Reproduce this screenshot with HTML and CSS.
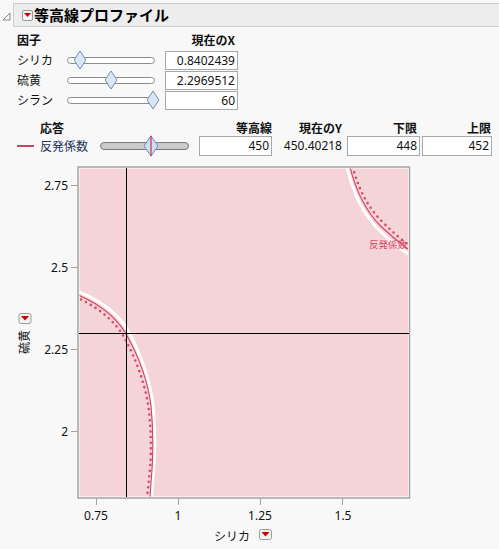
FILE: index.html
```html
<!DOCTYPE html>
<html lang="ja">
<head>
<meta charset="utf-8">
<title>等高線プロファイル</title>
<link rel="stylesheet" href="styles.css">
</head>
<body>
<div class="report">
  <div class="hdr">
    <svg class="disclose" width="9" height="9" viewBox="0 0 9 9"><path d="M1 8 L8 1 L8 8 Z" fill="none" stroke="#8a8a8a" stroke-width="1"/></svg>
    <div class="titlebar">
      <span class="rbtn"><svg width="9" height="6" viewBox="0 0 9 6"><path d="M1 1 L8 1 L4.5 5 Z" fill="#cc0000"/></svg></span>
      <span class="title">等高線プロファイル</span>
    </div>
  </div>

  <div class="factors">
    <div class="fhead">因子</div><div></div><div class="fhead num">現在のX</div>

    <div class="lbl">シリカ</div>
    <div class="slider"><span class="thumb" style="left:13.6%"><svg width="13" height="19" viewBox="0 0 13 19"><path d="M6.5 0.5 L12.5 9.5 L6.5 18.5 L0.5 9.5 Z" fill="#dbe6f4" stroke="#6f8db5"/></svg></span></div>
    <div class="box">0.8402439</div>

    <div class="lbl">硫黄</div>
    <div class="slider"><span class="thumb" style="left:50%"><svg width="13" height="19" viewBox="0 0 13 19"><path d="M6.5 0.5 L12.5 9.5 L6.5 18.5 L0.5 9.5 Z" fill="#dbe6f4" stroke="#6f8db5"/></svg></span></div>
    <div class="box">2.2969512</div>

    <div class="lbl">シラン</div>
    <div class="slider"><span class="thumb" style="left:99%"><svg width="13" height="19" viewBox="0 0 13 19"><path d="M6.5 0.5 L12.5 9.5 L6.5 18.5 L0.5 9.5 Z" fill="#dbe6f4" stroke="#6f8db5"/></svg></span></div>
    <div class="box">60</div>
  </div>

  <div class="responses">
    <div></div><div class="fhead">応答</div><div></div>
    <div class="fhead rh">等高線</div>
    <div class="fhead rh pad5">現在のY</div>
    <div class="fhead rh pad5">下限</div>
    <div class="fhead rh pad1">上限</div>

    <div class="swatch"></div>
    <div class="rname">反発係数</div>
    <div class="slider dark"><span class="thumb" style="left:58%"><svg width="15" height="21" viewBox="0 0 15 21"><path d="M7.5 0.5 L14.5 10.5 L7.5 20.5 L0.5 10.5 Z" fill="#cfdff2" stroke="#6f8db5"/><line x1="7.5" y1="0" x2="7.5" y2="21" stroke="#c8324e" stroke-width="1.2"/></svg></span></div>
    <div class="box rbox">450</div>
    <div class="val">450.40218</div>
    <div class="box rbox lo">448</div>
    <div class="box rbox">452</div>
  </div>

  <svg class="chart" width="499" height="389" viewBox="0 0 499 389">
    <defs>
      <pattern id="grid" x="79" y="168" width="24" height="24" patternUnits="userSpaceOnUse">
        <path d="M24 0 L24 24 M0 24 L24 24" stroke="#f7d9dd" stroke-width="1" fill="none"/>
      </pattern>
      <clipPath id="clip"><rect x="79.5" y="168.5" width="328.5" height="328"/></clipPath>
    </defs>
    <g transform="translate(0,-160)">
      <rect x="78" y="167" width="331.5" height="331" fill="#ffffff" stroke="#a4a4a4" stroke-width="1.5"/>
      <rect x="79.5" y="168.5" width="328.5" height="328" fill="#f5d4d8"/>
      <rect x="79.5" y="168.5" width="328.5" height="328" fill="url(#grid)"/>

      <g clip-path="url(#clip)" fill="none">
        <path d="M78,291.5 C100,300.5 118,313.5 128,330.5 C140,352 150,380 153,405 C155,425 155,450 154,465 C153,478 152,488 151.7,499" stroke="#ffffff" stroke-width="3"/>
        <path d="M78,295 C99,304 116,317 126,334 C138,355 148,382 151,406 C153,426 153,450 152.3,465 C151.5,478 150.5,488 150,499" stroke="#d04460" stroke-width="1.1"/>
        <path d="M81,299.5 C98,308 114,320 124,337 C135,357 145,383 148.5,407 C151,427 151.3,450 150.3,465 C149.3,478 148,488 147,499" stroke="#d44a64" stroke-width="2.6" stroke-linecap="round" stroke-dasharray="0 5.6"/>

        <path d="M346.5,165 C352,190 361,211 377,228 C390,241 400,249 410,255" stroke="#ffffff" stroke-width="3"/>
        <path d="M349.5,165 C355,188 364,209 380,225.5 C392,237 401,244 410,250.5" stroke="#d04460" stroke-width="1.1"/>
        <path d="M352.7,167 C358,187 367,207 383,222.5 C394,233.5 402,240 409,245" stroke="#d44a64" stroke-width="2.6" stroke-linecap="round" stroke-dasharray="0 5.6"/>
      </g>
      <text x="369" y="248" class="clabel">反発係数</text>

      <line x1="126.5" y1="168" x2="126.5" y2="497" stroke="#000" stroke-width="1"/>
      <line x1="79" y1="333.5" x2="409" y2="333.5" stroke="#000" stroke-width="1"/>

      <g stroke="#a4a4a4" stroke-width="1">
        <line x1="71" y1="185.5" x2="78" y2="185.5"/>
        <line x1="71" y1="267.5" x2="78" y2="267.5"/>
        <line x1="71" y1="349.5" x2="78" y2="349.5"/>
        <line x1="71" y1="431.5" x2="78" y2="431.5"/>
        <line x1="96.5" y1="498" x2="96.5" y2="505"/>
        <line x1="178.5" y1="498" x2="178.5" y2="505"/>
        <line x1="260.5" y1="498" x2="260.5" y2="505"/>
        <line x1="342.5" y1="498" x2="342.5" y2="505"/>
      </g>
      <g class="tick" text-anchor="end">
        <text x="68" y="189.5">2.75</text>
        <text x="68" y="271.5">2.5</text>
        <text x="68" y="353.5">2.25</text>
        <text x="68" y="435.5">2</text>
      </g>
      <g class="tick" text-anchor="middle">
        <text x="96" y="520">0.75</text>
        <text x="178" y="520">1</text>
        <text x="260" y="520">1.25</text>
        <text x="343" y="520">1.5</text>
      </g>

      <text x="232" y="541" class="axlabel" text-anchor="middle">シリカ</text>
      <g transform="translate(259,529)">
        <rect x="0.5" y="0.5" width="12" height="10" rx="2" fill="#f2f2f2" stroke="#9a9a9a"/>
        <path d="M2.5 3 L10.5 3 L6.5 7.5 Z" fill="#cc0000"/>
      </g>

      <g transform="translate(18.5,313)">
        <rect x="0.5" y="0.5" width="12" height="10" rx="2" fill="#f2f2f2" stroke="#9a9a9a"/>
        <path d="M2.5 3 L10.5 3 L6.5 7.5 Z" fill="#cc0000"/>
      </g>
      <text transform="translate(29,342) rotate(-90)" class="axlabel" text-anchor="middle">硫黄</text>
    </g>
  </svg>
</div>
</body>
</html>
```

FILE: styles.css
```css
* { box-sizing: border-box; }

body {
  margin: 0;
  background: #f8f8f8;
  font-family: "Noto Sans", "Noto Sans CJK JP", sans-serif;
  font-size: 12px;
  color: #111;
  width: 499px;
  height: 549px;
  overflow: hidden;
}

.report { display: flex; flex-direction: column; }

.hdr {
  display: flex;
  align-items: center;
  height: 30px;
  padding: 3px 0 3px 2px;
}

.disclose { margin-right: 2px; margin-top: 3px; }

.titlebar {
  flex: 1;
  display: flex;
  align-items: center;
  height: 24px;
  background: #ededed;
  border: 1px solid #cdcdcd;
  border-right: none;
  padding-left: 8px;
}

.rbtn {
  width: 11px;
  height: 11px;
  border: 1px solid #9a9a9a;
  border-radius: 2px;
  background: #f4f4f4;
  display: flex;
  align-items: center;
  justify-content: center;
  margin-right: 1px;
}

.title {
  font-family: "Noto Sans CJK JP", sans-serif;
  font-weight: bold;
  font-size: 15px;
  line-height: 20px;
  color: #000;
}

.factors {
  display: grid;
  grid-template-columns: 50px 98px 73px;
  grid-auto-rows: 20px;
  align-items: center;
  padding-left: 17px;
  margin-bottom: 2px;
}

.fhead {
  font-family: "Noto Sans CJK JP", sans-serif;
  font-weight: bold;
  line-height: 18px;
}

.num { text-align: right; padding-right: 3px; }

.lbl {
  font-family: "Noto Sans CJK JP", sans-serif;
  line-height: 18px;
}

.slider {
  position: relative;
  width: 88px;
  height: 7px;
  border: 1px solid #8c8c8c;
  border-radius: 4px;
  background: #ffffff;
}

.slider.dark {
  width: 89px;
  height: 8px;
  background: #cbcbcb;
  border-color: #7a7a7a;
}

.thumb {
  position: absolute;
  top: 50%;
  transform: translate(-50%, -50%);
  display: flex;
}

.box {
  height: 19px;
  align-self: start;
  margin-top: 1px;
  border: 1px solid #a8a8a8;
  background: #fff;
  text-align: right;
  padding-right: 2px;
  line-height: 17px;
}

.responses {
  display: grid;
  grid-template-columns: 23px 60px 99px 73px 75px 75px 70px;
  grid-template-rows: 24px 20px;
  padding-left: 17px;
  padding-bottom: 4px;
  align-items: center;
}

.responses .fhead { align-self: end; margin-bottom: -1px; }
.rh { text-align: right; }
.pad5 { padding-right: 5px; }
.pad1 { padding-right: 1px; }

.swatch {
  width: 17px;
  height: 2px;
  background: #d04460;
}

.rname {
  font-family: "Noto Sans CJK JP", sans-serif;
  color: #22335a;
  line-height: 18px;
}

.rbox {
  height: 20px;
  margin-top: 0;
  line-height: 18px;
}

.lo { width: 73px; }

.val {
  text-align: right;
  padding-right: 5px;
  line-height: 18px;
}

.chart { display: block; }

.tick {
  font-family: "Noto Sans", sans-serif;
  font-size: 12px;
  fill: #111;
}

.axlabel {
  font-family: "Noto Sans CJK JP", sans-serif;
  font-size: 12px;
  fill: #111;
}

.clabel {
  font-family: "Noto Sans CJK JP", sans-serif;
  font-size: 9.5px;
  fill: #d04a66;
}
```
